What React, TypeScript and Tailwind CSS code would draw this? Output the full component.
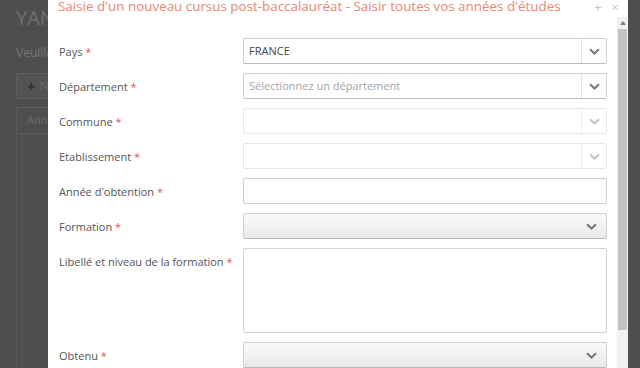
import React from "react";

const font = { fontFamily: '"Open Sans", "Liberation Sans", sans-serif' };

function Chevron({ light }: { light?: boolean }) {
  return (
    <svg width="11" height="7" viewBox="0 0 11 7">
      <path
        d="M1 1.2 L5.5 5.5 L10 1.2"
        fill="none"
        stroke={light ? "#c4c4c4" : "#777"}
        strokeWidth="2"
      />
    </svg>
  );
}

function Label({ text }: { text: string }) {
  return (
    <div className="w-[184px] shrink-0 pt-[2px] text-[11px] leading-[24px] text-[#555]">
      {text} <span className="text-[#e05a5a]">*</span>
    </div>
  );
}

function Select({
  value,
  placeholder,
  disabled,
}: {
  value?: string;
  placeholder?: string;
  disabled?: boolean;
}) {
  return (
    <div
      className={`flex h-[26px] flex-1 items-center rounded-[2px] border bg-white ${
        disabled ? "border-[#e8e8e8]" : "border-[#cfcfcf] border-b-[#bdbdbd]"
      }`}
    >
      <div className="flex-1 truncate px-[5px] text-[11px]">
        {value && <span className="text-[#444]">{value}</span>}
        {placeholder && <span className="text-[#a5a5a5]">{placeholder}</span>}
      </div>
      <div
        className={`flex h-full w-[25px] items-center justify-center border-l ${
          disabled ? "border-[#eeeeee]" : "border-[#e2e2e2]"
        }`}
      >
        <Chevron light={disabled} />
      </div>
    </div>
  );
}

function ButtonSelect() {
  return (
    <div className="flex h-[26px] flex-1 items-center justify-end rounded-[2px] border border-[#cfcfcf] border-b-[#b8b8b8] bg-gradient-to-b from-[#fafafa] to-[#e9e9e9] pr-[9px]">
      <Chevron />
    </div>
  );
}

export default function App() {
  return (
    <div className="relative h-[368px] w-[640px] overflow-hidden bg-[#4e4e4e]" style={font}>
      {/* page behind the overlay */}
      <div className="px-[16px] text-[#7a7a7a]">
        <div className="pt-[6px] text-[20px] leading-[24px] text-[#6f6f6f]">YANNICK</div>
        <div className="mt-[14px] text-[12px] text-[#767676]">Veuillez saisir vos études</div>
        <div className="mt-[11px] flex h-[26px] w-[120px] items-center gap-[4px] rounded-[2px] border border-[#5e5e5e] bg-[#535353] px-[10px] text-[12px] text-[#6a6a6a]">
          <span className="text-[15px] font-bold text-[#2f2f2f]">+</span>
          <span>Nouveau</span>
        </div>
        <div className="mt-[8px] flex h-[27px] items-center justify-between border border-[#5c5c5c] px-[10px] text-[11px] text-[#6d6d6d]">
          <span>Année</span>
          <span className="text-[#8a8a8a]">Action</span>
        </div>
        <div className="flex h-[240px] border-x border-[#585858]">
          <div className="w-[6px] border-r border-[#585858]" />
        </div>
      </div>

      {/* modal */}
      <div className="absolute left-[48px] top-0 flex h-[368px] w-[580px] flex-col bg-white">
        <div className="flex h-[20px] items-start pl-[10px] pr-[9px]">
          <div className="-mt-[4px] flex-1 text-[13.4px] leading-[20px] text-[#ea876f]">
            Saisie d'un nouveau cursus post-baccalauréat - Saisir toutes vos années d'études
          </div>
          <div className="-mt-[3px] flex gap-[10px] text-[13px] leading-[20px] text-[#c8c8c8]">
            <span>+</span>
            <span>×</span>
          </div>
        </div>
        <div className="flex flex-1">
          <div className="flex flex-1 flex-col gap-[9px] pl-[11px] pr-[10px] pt-[21px]">
            <div className="flex">
              <Label text="Pays" />
              <Select value="FRANCE" />
            </div>
            <div className="flex">
              <Label text="Département" />
              <Select placeholder="Sélectionnez un département" />
            </div>
            <div className="flex">
              <Label text="Commune" />
              <Select disabled />
            </div>
            <div className="flex">
              <Label text="Etablissement" />
              <Select disabled />
            </div>
            <div className="flex">
              <Label text="Année d'obtention" />
              <div className="h-[26px] flex-1 rounded-[2px] border border-[#cfcfcf]" />
            </div>
            <div className="flex">
              <Label text="Formation" />
              <ButtonSelect />
            </div>
            <div className="flex">
              <Label text="Libellé et niveau de la formation" />
              <div className="h-[85px] flex-1 rounded-[2px] border border-[#d2d2d2]" />
            </div>
            <div className="flex">
              <Label text="Obtenu" />
              <ButtonSelect />
            </div>
          </div>
          <div className="flex w-[11px] flex-col bg-[#f1f1f1]">
            <div className="flex h-[12px] items-center justify-center">
              <div className="h-0 w-0 border-x-[3px] border-b-[4px] border-x-transparent border-b-[#7a7a7a]" />
            </div>
            <div className="mx-[1px] h-[301px] bg-[#c3c3c3]" />
          </div>
        </div>
      </div>
    </div>
  );
}
